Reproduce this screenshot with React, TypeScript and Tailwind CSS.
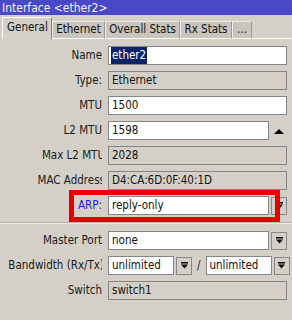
import React from 'react';

const font = { fontFamily: '"DejaVu Sans Condensed", "DejaVu Sans", sans-serif', fontStretch: 'condensed' as const };

const DropBtn = ({ className = '' }: { className?: string }) => (
  <div className={`flex h-[18px] w-[16px] shrink-0 items-center justify-center border border-[#888] bg-[#d4d0c8] ${className}`}>
    <svg width="9" height="9" viewBox="0 0 9 9">
      <rect x="1" y="1" width="7" height="1.5" fill="#000" />
      <path d="M1 3.5h7L4.5 7.5z" fill="#000" />
    </svg>
  </div>
);

const Field = ({ value, ro, className = '', selected }: { value: string; ro?: boolean; className?: string; selected?: boolean }) => (
  <div
    className={`flex h-[19px] min-w-0 items-center overflow-hidden whitespace-nowrap border border-[#858585] pl-[2px] text-[11.5px] text-[#111] ${
      ro ? 'bg-[#d4d0c8]' : 'bg-white'
    } ${className}`}
  >
    {selected ? <span className="bg-[#0a246a] px-[1px] text-white">{value}</span> : <span className="pl-[1px]">{value}</span>}
  </div>
);

const Row = ({
  label,
  children,
  labelClass = 'text-[#1a1a1a]',
  shift = '',
  extra,
}: {
  label: string;
  children: React.ReactNode;
  labelClass?: string;
  shift?: string;
  extra?: React.ReactNode;
}) => (
  <div className="relative flex h-[19px] items-center">
    <div className="w-[102px] shrink-0 overflow-hidden whitespace-nowrap text-[11.5px]">
      <div className={`flex justify-end ${shift}`}>
        <span className={labelClass}>{label}</span>
      </div>
    </div>
    <div className="ml-[6px] mr-[5px] flex flex-1 items-center">{children}</div>
    {extra}
  </div>
);

export default function App() {
  const tabs = [
    { t: 'Ethernet', w: 'w-[53px]' },
    { t: 'Overall Stats', w: 'w-[75px]' },
    { t: 'Rx Stats', w: 'w-[52px]' },
    { t: '...', w: 'w-[20px]' },
  ];
  return (
    <div className="h-[320px] w-[292px] overflow-hidden bg-[#d4d0c8]" style={font}>
      <div className="flex h-[15px] items-center bg-[#4949c8] pl-[2px] text-[12px] leading-none text-[#f0f0ff]">
        Interface &lt;ether2&gt;
      </div>

      {/* tabs */}
      <div className="relative flex h-[24px] items-end pl-[2px]">
        <div className="relative z-10 flex h-[22px] w-[50px] items-center border-l border-t border-r border-l-white border-t-white border-r-[#808080] bg-[#d4d0c8] pl-[4px] pb-[2px] text-[11.5px] text-[#111]">
          General
        </div>
        {tabs.map(({ t, w }) => (
          <div
            key={t}
            className={`flex h-[18px] items-center justify-center border-l border-t border-r border-b border-l-[#ececec] border-t-[#ececec] border-r-[#9a9a9a] border-b-white bg-[#c9c5bd] text-[11.5px] text-[#111] ${w}`}
          >
            {t}
          </div>
        ))}
        <div className="h-px flex-1 self-end bg-white" />
      </div>

      <div className="flex flex-col gap-[6px] pt-[7px]">
        <Row label="Name">
          <Field value="ether2" selected className="flex-1" />
        </Row>
        <Row label="Type:">
          <Field value="Ethernet" ro className="flex-1" />
        </Row>
        <Row label="MTU">
          <Field value="1500" className="flex-1" />
        </Row>
        <Row label="L2 MTU">
          <Field value="1598" className="flex-1" />
          <svg width="18" height="18" viewBox="0 0 18 18" className="shrink-0">
            <path d="M5 12h10L10 7z" fill="#000" />
          </svg>
        </Row>
        <Row label="Max L2 MTU" shift="mr-[-3px]">
          <Field value="2028" ro className="flex-1" />
        </Row>
        <Row label="MAC Address" shift="mr-[-3px]">
          <Field value="D4:CA:6D:0F:40:1D" ro className="flex-1" />
        </Row>
        <Row
          label="ARP:"
          labelClass="text-[#1e1ee6]"
          extra={<div className="pointer-events-none absolute left-[69px] top-[-6px] h-[32px] w-[211px] border-[5px] border-[#e60000]" />}
        >
          <Field value="reply-only" className="flex-1" />
          <DropBtn className="ml-[2px]" />
        </Row>

        <div className="my-[1px] h-[2px] border-t border-b border-t-[#b8b4ac] border-b-[#ecebe6]" />

        <Row label="Master Port">
          <Field value="none" className="flex-1" />
          <DropBtn className="ml-[2px]" />
        </Row>
        <Row label="Bandwidth (Rx/Tx)" shift="mr-[-2px]">
          <Field value="unlimited" className="w-[66px]" />
          <DropBtn className="ml-[2px]" />
          <span className="mx-[5px] text-[11.5px] text-[#1a1a1a]">/</span>
          <Field value="unlimited" className="w-[66px]" />
          <DropBtn className="ml-[2px]" />
        </Row>
        <Row label="Switch">
          <Field value="switch1" ro className="flex-1" />
        </Row>
      </div>
    </div>
  );
}
